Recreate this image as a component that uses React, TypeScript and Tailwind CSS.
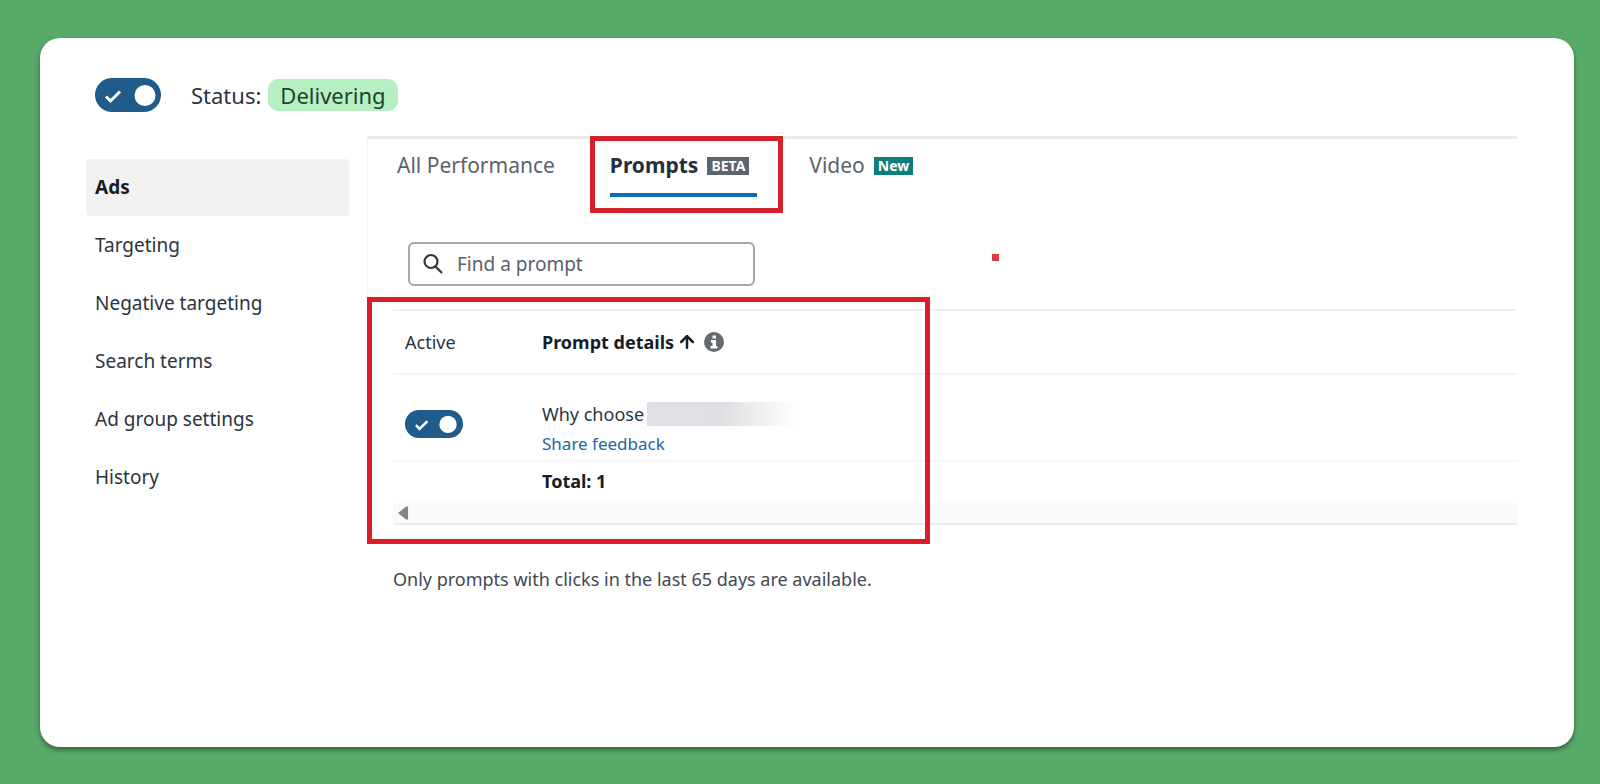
// Icons
import { ArrowUp } from "lucide-react"


// Sidebar links
const navLinks = [
    { href: "#ads", label: "Ads", active: true },
    { href: "#targeting", label: "Targeting" },
    { href: "#negative-targeting", label: "Negative targeting" },
    { href: "#search-terms", label: "Search terms" },
    { href: "#settings", label: "Ad group settings" },
    { href: "#history", label: "History" },
];

const Toggle = ({ label, large = false }: { label: string; large?: boolean }) => {
    return (
        <label className={`relative block shrink-0 rounded-full bg-[#1f5c8b] ${large ? "h-[34px] w-[66px]" : "h-7 w-[58px]"}`}>
            <input type="checkbox" role="switch" defaultChecked aria-label={label} className="absolute inset-0 size-full cursor-pointer appearance-none" />
            <svg viewBox="0 0 66 34" className="pointer-events-none block size-full" fill="none">
                <path d="M11 18.500l4.500 4.500L25 13.500" stroke="#fff" strokeWidth="3" />
                <circle cx="50" cy="17.500" r="10.500" fill="#fff" />
            </svg>
        </label>
    )
}

const Header = () => {
    return (
        <header className="flex items-center pl-[9px]">
            <Toggle label="Ad group status" large />
            <span className="ml-[30px] text-[22px] leading-8 text-[#2b3440]">Status:</span>
            <span className="ml-[7px] rounded-[10px] bg-[#b5efc2] px-3 text-[22px] leading-8 text-[#22412f]">Delivering</span>
        </header>
    )
}

const Sidebar = () => {
    return (
        <nav className="mr-[18px] flex w-[263px] shrink-0 flex-col gap-px pt-[23px]">
            {navLinks.map((link) => (
                <a
                    key={link.href}
                    href={link.href}
                    className={`flex h-[57px] items-center rounded-sm pl-[9px] text-[19px] ${link.active ? "bg-[#f3f2f0] font-bold text-[#161d26]" : "text-[#2b3440]"}`}
                >
                    {link.label}
                </a>
            ))}
        </nav>
    )
}

const Tabs = () => {
    return (
        <div role="tablist" className="flex h-[58px] items-stretch pl-[29px] text-[21px] text-[#5b626c]">
            <button role="tab" aria-selected="false" className="flex items-center pb-1">All Performance</button>
            <button role="tab" aria-selected="true" className="relative ml-[55px] flex items-center gap-[9px] border-b-4 border-[#0b6fb8] pr-2 font-bold text-[#232f3e]">
                Prompts
                <span className="bg-[#5c6470] px-1 text-sm leading-[18px] text-white">BETA</span>
                <span className="pointer-events-none absolute -top-[3px] -right-[26px] -bottom-5 -left-5 border-5 border-[#d5202a]" />
            </button>
            <button role="tab" aria-selected="false" className="ml-[52px] flex items-center gap-[9px] pb-1">
                Video
                <span className="bg-[#0d7f7b] px-1 text-sm leading-[18px] font-bold text-white">New</span>
            </button>
        </div>
    )
}

const PromptTable = () => {
    return (
        <div className="relative pl-[26px]">
            <table className="w-full table-fixed border-t-2 border-[#f0f0f0] text-left text-lg text-[#2b3440]">
                <thead>
                    <tr className="h-16 border-b-2 border-[#f5f5f5]">
                        <th className="w-[149px] pl-3 font-normal">Active</th>
                        <th className="font-bold text-[#161d26]">
                            <span className="flex items-center">
                                Prompt details
                                <ArrowUp className="ml-[3px] size-5" strokeWidth={3} />
                                <svg viewBox="0 0 20 20" className="ml-[7px] size-5">
                                    <circle cx="10" cy="10" r="10" fill="#666a6d" />
                                    <path d="M8.500 3.500h3.500v3H8.500zM7 8h5v6h1.500v2.500H6.500V14H8.500v-3.500H7z" fill="#fff" />
                                </svg>
                            </span>
                        </th>
                    </tr>
                </thead>
                <tbody>
                    <tr className="h-[87px] border-b-2 border-[#f8f8f8]">
                        <td className="pt-3 pl-3"><Toggle label="Prompt active" /></td>
                        <td className="pt-6 align-top">
                            <div className="flex h-[30px] items-center">
                                Why choose
                                <span className="ml-[3px] h-6 w-[150px] bg-linear-to-r from-[#dfe1e5] via-[#dddfe2] to-white" />
                            </div>
                            <a href="#feedback" className="block text-[17px] leading-[30px] text-[#2464a0]">Share feedback</a>
                        </td>
                    </tr>
                </tbody>
                <tfoot>
                    <tr className="h-[42px] font-bold text-[#161d26]">
                        <td />
                        <td className="pb-1">Total: 1</td>
                    </tr>
                </tfoot>
            </table>
            <div className="flex h-[22px] items-center border-b-2 border-[#ececec] bg-[#fafafa]">
                <button aria-label="Scroll left" className="pl-[5px]">
                    <svg viewBox="0 0 12 14" className="h-[14px] w-[11px]">
                        <path d="M0 7l9-7h2v14H9z" fill="#858585" />
                    </svg>
                </button>
            </div>
            <div className="pointer-events-none absolute -top-3 -bottom-[19px] left-0 w-[563px] border-5 border-[#dc1c28]" />
        </div>
    )
}

const App = () => {
    return (
        <div className="flex min-h-screen bg-[#58aa69] pt-[38px] pr-[26px] pb-[37px] pl-10 font-['Noto_Sans',sans-serif]">
            <main className="flex grow flex-col rounded-[20px] bg-white pt-10 pr-[57px] pb-[37px] pl-[46px] shadow-[0_3px_5px_rgba(0,0,0,0.4)]">
                <Header />
                <div className="mt-6 flex grow">
                    <Sidebar />
                    <section className="grow border-t-3 border-[#ececec]">
                        <div className="border-l border-[#f6f6f6] pb-[23px]">
                            <Tabs />
                            <div className="mt-[45px] flex items-start pl-10">
                                <label className="flex h-11 w-[347px] items-center rounded-md border-2 border-[#a3a6aa] pl-[11px]">
                                    <svg viewBox="0 0 24 24" className="size-6 shrink-0" fill="none" stroke="#30363d" strokeWidth="2.200">
                                        <circle cx="10" cy="9.500" r="6.500" />
                                        <path d="M14 14l7 7" />
                                    </svg>
                                    <input type="text" aria-label="Find a prompt" placeholder="Find a prompt" className="ml-3 min-w-0 grow text-[19px] outline-none placeholder:text-[#59616b]" />
                                </label>
                                <span className="mt-3 ml-[237px] size-[7px] bg-[#dc3a44]" />
                            </div>
                        </div>
                        <PromptTable />
                        <p className="mt-10 pl-[26px] text-lg text-[#3f4853]">Only prompts with clicks in the last 65 days are available.</p>
                    </section>
                </div>
            </main>
        </div>
    )
}

export default App;
